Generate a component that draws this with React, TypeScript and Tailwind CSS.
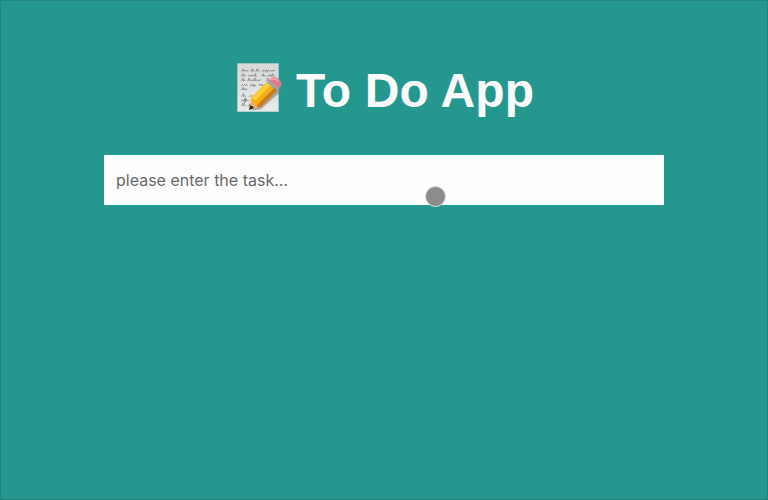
function MemoIcon() {
  return (
    <svg width="46" height="50" viewBox="21 21 138 150" className="shrink-0" aria-hidden="true">
      <defs>
        <linearGradient id="paper" x1="0" y1="0" x2="0" y2="1">
          <stop offset="0" stopColor="#d6d9d7" />
          <stop offset="1" stopColor="#e9eae9" />
        </linearGradient>
      </defs>
      <rect x="23" y="23" width="122" height="144" fill="url(#paper)" stroke="#b9cfca" strokeWidth="2" />
      <g fill="none" stroke="#3b3d3e" strokeWidth="1.25" strokeLinecap="round" strokeLinejoin="round">
        <path d="M35 46l4-7 1 7 4-4 2 4 4-4 2 4 3-3M63 46l4-8-1 8 5-4 1 4M78 46l4-8 0 8 4-5 2 5M96 46l4-4 1 4 4-4 2 4 4-4 1 7 3-7M119 46l4-4 2 4 4-4 1 4 4-3" />
        <path d="M34 61l4-8 2 8 4-5 1 5M55 61l3-4 3 4 4-5 2 5 3-4 3 4 4-8 0 8 2 0M95 61l5-8 0 8 4-4 2 4M112 61l4-4 2 4 4-5 2 5 4-8 1 8 4-4" />
        <path d="M34 75l5-9 0 9 4-4 2 4M53 75l4-9 1 9 4-4 3 4 4-4 2 4 4-9 1 9 4-4 2 4 4-4 2 4 4-4M108 75l6-9 0 9 4-4 1 4" />
        <path d="M34 89l4-4 2 4 4-4 2 4 4-4 2 4M61 92l4-8 3 4 4-3-1 8 4-6 3 2M87 89l4-5 2 5 4-5 1 5M106 89l4-7 0 7 4-3" />
        <path d="M34 102l5-8 0 8 4-5 2 5 4-4 1 4" />
        <path d="M35 122l5-10 1 10 4-4 2 4M57 122l4-4 3 4 4-5" />
        <path d="M34 136l4-5 2 5 5-9-2 15 6-15-2 9 4-4 3 4 4-5" />
        <path d="M35 150l4-9 1 9 4-4 3 4M55 151l4-8 1 7" />
      </g>
      <path d="M64 164L140 103L156 82L154 106L92 160Z" fill="#7d817b" opacity=".6" />
      <path d="M58 161L64 127L92 152Z" fill="#dfb173" />
      <path d="M65 128Q66 122 72 117L111 78L141 104L96 150Q90 156 83 154Q83 148 76 146Q67 143 65 128Z" fill="#f5b01a" />
      <path d="M67 124L114 80L122 87L78 132Q71 134 67 124Z" fill="#ffd037" />
      <path d="M81 147L132 96L141 104L96 150Q89 156 83 154Z" fill="#cc7e18" />
      <path d="M57 162L60 148Q68 150 72 157Z" fill="#302a27" />
      <path d="M111 78L117 72L147 97L141 104Z" fill="#848d90" />
      <path d="M114 75L144 100" stroke="#ccd4d5" strokeWidth="2.5" />
      <path d="M117 72L123 66Q131 60 142 66Q156 75 154 88L147 97Z" fill="#e2778a" />
      <path d="M122 71Q132 64 143 74" stroke="#fba8b2" strokeWidth="5" strokeLinecap="round" fill="none" />
    </svg>
  );
}

export default function App() {
  return (
    <main className="relative flex h-[500px] w-[768px] flex-col items-center overflow-hidden border border-[#20867e] bg-[#24988f]">
      <h1 className="mt-[62px] flex h-[56px] w-[560px] items-start pl-[133px] font-['Liberation_Sans',Arial,sans-serif] text-[48px] leading-[56px] font-bold tracking-[0.1px] whitespace-nowrap text-[#fbfbfe]">
        <span className="mr-[13px]"><MemoIcon /></span>
        <span>To Do App</span>
      </h1>
      <input
        type="text"
        placeholder="please enter the task..."
        className="mt-[36px] h-[50px] w-[560px] rounded-none border-0 bg-[#fdfdfe] px-3 font-['Inter',sans-serif] text-[16px] text-[#444] outline-none placeholder:text-[#686868] placeholder:opacity-100"
      />
      <div className="pointer-events-none absolute top-[185px] left-[424px] h-[21px] w-[21px] rounded-full border border-[#d5e3e1] bg-[#8c8c8c]" />
    </main>
  );
}
